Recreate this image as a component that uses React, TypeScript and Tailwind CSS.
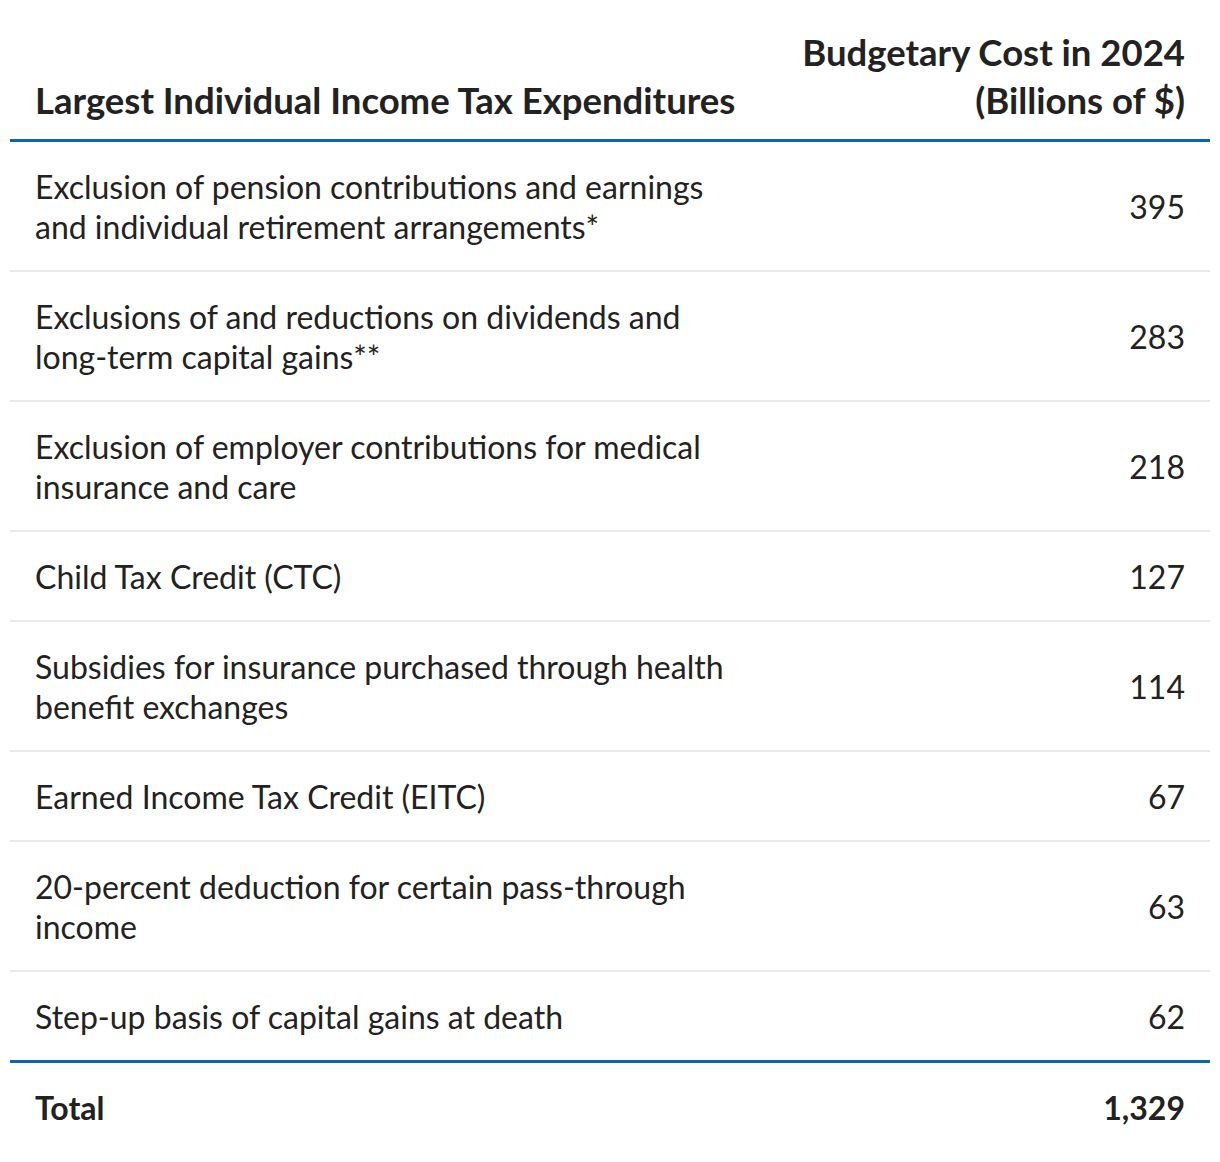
import React from 'react';

const rows = [
  { label: 'Exclusion of pension contributions and earnings and individual retirement arrangements*', value: '395' },
  { label: 'Exclusions of and reductions on dividends and long-term capital gains**', value: '283' },
  { label: 'Exclusion of employer contributions for medical insurance and care', value: '218' },
  { label: 'Child Tax Credit (CTC)', value: '127' },
  { label: 'Subsidies for insurance purchased through health benefit exchanges', value: '114' },
  { label: 'Earned Income Tax Credit (EITC)', value: '67' },
  { label: '20-percent deduction for certain pass-through income', value: '63' },
  { label: 'Step-up basis of capital gains at death', value: '62' },
];

export default function App() {
  return (
    <div className="min-h-[1162px] bg-white px-[10px] pt-[28px] font-['Lato','Liberation_Sans',sans-serif] text-[#222222]">
      <table className="w-full table-fixed border-collapse">
        <colgroup>
          <col className="w-[62.5%]" />
          <col className="w-[37.5%]" />
        </colgroup>
        <thead>
          <tr className="border-b-[3px] border-[#0b66b0]">
            <th className="px-[25px] pb-[15px] text-left align-bottom text-[36.5px] font-bold leading-[48px] whitespace-nowrap">
              Largest Individual Income Tax Expenditures
            </th>
            <th className="px-[25px] pb-[15px] text-right align-bottom text-[36.5px] font-bold leading-[48px] whitespace-nowrap">
              Budgetary Cost in 2024
              <br />
              (Billions of $)
            </th>
          </tr>
        </thead>
        <tbody>
          {rows.map((row, i) => (
            <tr
              key={row.value}
              className={i === rows.length - 1 ? 'border-b-[3px] border-[#0b66b0]' : 'border-b-2 border-[#e9e9e9]'}
            >
              <td className="px-[25px] pt-[25px] pb-[23px] text-left align-middle text-[32px] leading-[40px]">{row.label}</td>
              <td className="px-[25px] pt-[25px] pb-[23px] text-right align-middle text-[32px] leading-[40px]">{row.value}</td>
            </tr>
          ))}
          <tr>
            <td className="px-[25px] py-[25px] text-left text-[32px] font-bold leading-[40px]">Total</td>
            <td className="px-[25px] py-[25px] text-right text-[32px] font-bold leading-[40px]">1,329</td>
          </tr>
        </tbody>
      </table>
    </div>
  );
}
